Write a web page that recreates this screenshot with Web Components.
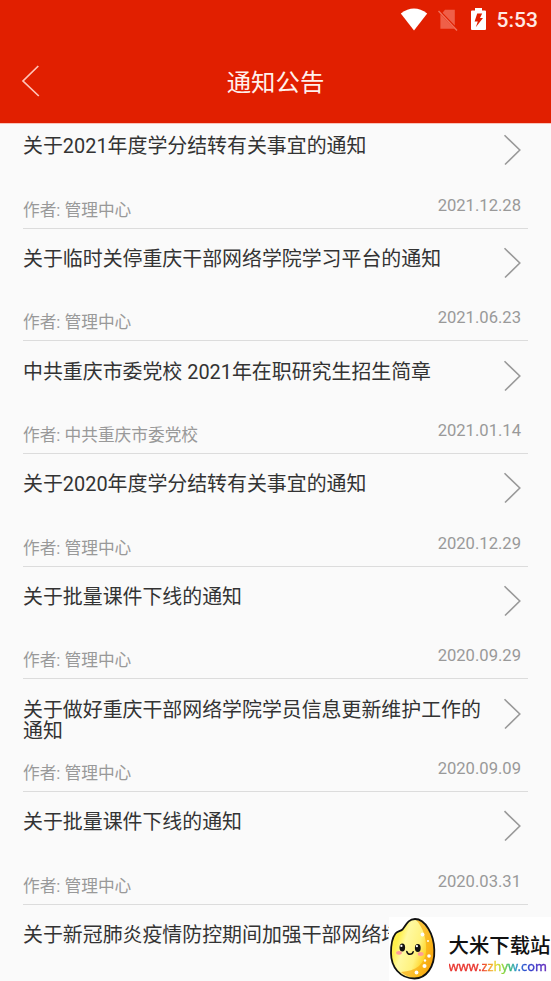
<!DOCTYPE html>
<html lang="zh-CN">
<head>
<meta charset="utf-8">
<title>通知公告</title>
<style>
html,body{margin:0;height:100%;overflow:hidden}
body{background:#fafafa;font-family:Roboto,"Noto Sans CJK SC",sans-serif}
</style>
</head>
<body>
<notice-app></notice-app>
<script>
class StatusBar extends HTMLElement {
  constructor(){
    super();
    this.attachShadow({mode:'open'}).innerHTML = `
<style>
:host{display:flex;justify-content:flex-end;align-items:center;height:40px;padding-right:13px;box-sizing:border-box;color:#fff}
svg{display:block;flex:none}
.wifi{margin-right:10px}.sim{margin-right:13px}.bat{margin-right:11px}
span{font-size:21px;line-height:42px;font-weight:500;color:#ffe9e4;width:41.5px;white-space:nowrap}
</style>
<svg class="wifi" width="28" height="24" viewBox="0 0 28 24"><path d="M.8 5.5Q14-4.5 27.2 5.5L14 22.4Z" fill="#fff"/></svg>
<svg class="sim" width="20" height="24" viewBox="0 0 20 24"><path d="M7 1.8H16.8V17.6L4.6 4.8Z M2.4 6.2 16.4 20.8H2.4Z" fill="#ef5f48"/><path d="M.5 3 19 22.5" stroke="#f0715b" stroke-width="1.4"/></svg>
<svg class="bat" width="15" height="24" viewBox="0 0 15 24"><path d="M0 3.5Q0 2.5 1 2.5H4V0H11V2.5H14Q15 2.5 15 3.5V21Q15 22 14 22H1Q0 22 0 21Z" fill="#fff"/><path d="M6.2 5.4H11.2L9 10H12L4.8 19.2 6.8 13.4H3.6Z" fill="#e11f00"/></svg>
<span>5:53</span>`;
  }
}
customElements.define('status-bar', StatusBar);

class NavHeader extends HTMLElement {
  constructor(){
    super();
    this.attachShadow({mode:'open'}).innerHTML = `
<style>
:host{display:block;height:124px;background:#e11f00;position:relative;z-index:1;border-bottom:1px solid #f9c4ba;box-sizing:border-box}
.bar{display:grid;grid-template-columns:60px 1fr 60px;height:82px;align-items:center}
svg{display:block;margin-left:20.5px}
h1{margin:3px 0 0;font-size:24.4px;line-height:36px;font-weight:400;text-align:center;color:#fff0ec}
</style>
<status-bar></status-bar>
<div class="bar"><svg width="20" height="34" viewBox="0 0 20 34"><path d="M17.3 2 2 17 17.8 32" fill="none" stroke="#ffc5b9" stroke-width="1.7"/></svg><h1><slot></slot></h1></div>`;
  }
}
customElements.define('nav-header', NavHeader);

class NoticeItem extends HTMLElement {
  constructor(){
    super();
    this.attachShadow({mode:'open'}).innerHTML = `
<style>
:host{display:flex;flex-direction:column;justify-content:space-between;height:112.67px;box-sizing:border-box;padding:20.3px 7px 4.9px 0;border-bottom:1.4px solid #dcdcdc}
.top{display:flex;justify-content:space-between;align-items:flex-start}
.title{font-size:19.92px;line-height:21.5px;color:#333;width:462px}
svg{display:block;flex:none;margin:-3px 0 0 0}
.meta{display:flex;justify-content:space-between;align-items:flex-start;font-size:16.7px;line-height:24px;color:#999}
.date{margin-top:-5px;font-size:16.6px}
</style>
<div class="top"><div class="title"><slot></slot></div><svg width="18" height="34" viewBox="0 0 18 34"><path d="M1.5 2.2 16.8 17 2 31.5" fill="none" stroke="#999" stroke-width="1.6"/></svg></div>
<div class="meta"><span><slot name="author"></slot></span><span class="date"><slot name="date"></slot></span></div>`;
  }
}
customElements.define('notice-item', NoticeItem);

class SiteBadge extends HTMLElement {
  constructor(){
    super();
    this.attachShadow({mode:'open'}).innerHTML = `
<style>
:host{display:flex;position:absolute;right:0;bottom:0;width:162px;height:64px;background:#fff;z-index:2;overflow:hidden}
svg{display:block;flex:none}
.copy{padding:14px 0 0 11.5px;white-space:nowrap}
.name{font:500 20.4px/26px "Noto Sans CJK SC",sans-serif;color:#111}
.url{font:12.8px/15px "Noto Sans","Open Sans",sans-serif;-webkit-text-stroke:.35px transparent;background:linear-gradient(90deg,#e8302a 0%,#e8302a 29%,#ee4a30 34%,#f3a52a 41%,#e8d92e 46%,#8ed634 53%,#35b96a 59%,#2f9fc4 65%,#2f5fd0 72%,#3040cc 79%,#4a2fc4 88%,#6a28b8 97%);-webkit-background-clip:text;background-clip:text;color:transparent;width:102px;margin-top:1.5px}
</style>
<svg width="48" height="64" viewBox="0 0 48 64">
<defs><linearGradient id="g" x1=".15" y1=".35" x2=".95" y2=".7"><stop offset="0" stop-color="#fff04a"/><stop offset=".2" stop-color="#fff9a0"/><stop offset=".55" stop-color="#fff27e"/><stop offset=".78" stop-color="#ffd52c"/><stop offset="1" stop-color="#f29a0c"/></linearGradient></defs>
<path d="M13.5 12.5C17 8 19 2 26 2C36 2 45 17 45.3 33C46 50 37 61.5 25.5 61.5C11 61.5 2 50 2 36C2 28 3 21 6.5 16.5C8.5 14 11 14.5 13.5 12.5Z" fill="url(#g)"/>
<path d="M27 3C34 10 38 22 37 35C36 47 27 54 12 55C18 60 24 61 28 60.5C40 58 45 46 44.5 33C44 18 36 4 27 3Z" fill="#f8ab14" opacity=".7"/>
<path d="M13.5 12.5C17 8 19 2 26 2C36 2 45 17 45.3 33C46 50 37 61.5 25.5 61.5C11 61.5 2 50 2 36C2 28 3 21 6.5 16.5C8.5 14 11 14.5 13.5 12.5Z" fill="none" stroke="#111" stroke-width="1.8"/>
<g fill="#111"><ellipse cx="13.3" cy="30.5" rx="2.8" ry="3.9"/><ellipse cx="28.8" cy="31" rx="2.9" ry="4"/></g>
<g fill="#fff"><circle cx="12.4" cy="28.9" r="1.1"/><circle cx="27.9" cy="29.2" r="1.1"/><circle cx="33.5" cy="17.5" r="1.9"/><circle cx="39" cy="24" r="1"/><circle cx="40" cy="39" r="1.8"/><circle cx="35.5" cy="49" r="2"/><circle cx="27.5" cy="55.5" r="1.9"/><circle cx="36" cy="43.5" r="1.2"/></g>
<path d="M17.8 34.5Q18.6 37.3 21 37.3Q23.6 37.3 24.2 34.7" fill="none" stroke="#111" stroke-width="1.5" stroke-linecap="round"/>
<ellipse cx="10" cy="35.8" rx="2.9" ry="1.9" fill="#ff9d98"/><ellipse cx="31.7" cy="37" rx="2.9" ry="1.9" fill="#ff9d98"/>
</svg>
<div class="copy"><div class="name">大米下载站</div><div class="url">www.zzhyw.com</div></div>`;
  }
}
customElements.define('site-badge', SiteBadge);

class NoticeApp extends HTMLElement {
  constructor(){
    super();
    const rows = [
      ['关于2021年度学分结转有关事宜的通知','管理中心','2021.12.28'],
      ['关于临时关停重庆干部网络学院学习平台的通知','管理中心','2021.06.23'],
      ['中共重庆市委党校 2021年在职研究生招生简章','中共重庆市委党校','2021.01.14'],
      ['关于2020年度学分结转有关事宜的通知','管理中心','2020.12.29'],
      ['关于批量课件下线的通知','管理中心','2020.09.29'],
      ['关于做好重庆干部网络学院学员信息更新维护工作的通知','管理中心','2020.09.09'],
      ['关于批量课件下线的通知','管理中心','2020.03.31']
    ];
    this.attachShadow({mode:'open'}).innerHTML = `
<style>
:host{display:block;position:relative;width:551px;height:981px;overflow:hidden;background:#fafafa}
main{margin:-8px 23px 0 23px}
.last{padding-top:20px;font-size:19.92px;line-height:21.5px;color:#333;white-space:nowrap}
</style>
<nav-header>通知公告</nav-header>
<main>${rows.map(r=>`<notice-item>${r[0]}<span slot="author">作者: ${r[1]}</span><span slot="date">${r[2]}</span></notice-item>`).join('')}
<div class="last">关于新冠肺炎疫情防控期间加强干部网络培</div></main>
<site-badge></site-badge>`;
  }
}
customElements.define('notice-app', NoticeApp);
</script>
</body>
</html>
